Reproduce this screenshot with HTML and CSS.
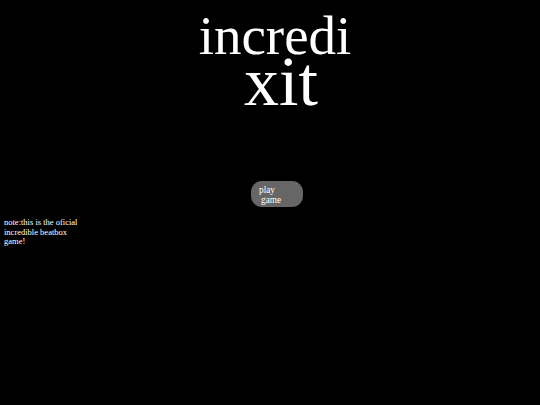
FILE: index.html
```html
<!DOCTYPE html>
<html>
<head>
<meta charset="utf-8">
<link rel="stylesheet" href="styles.css">
</head>
<body>
<main class="page">
  <h1 class="title">
    <span class="title-top">incredi</span>
    <span class="title-bottom">xit</span>
  </h1>
  <button class="play"><span class="play-l1">play</span><span class="play-l2">game</span></button>
  <p class="note">note:this is the oficial incredible beatbox game!</p>
</main>
</body>
</html>
```

FILE: styles.css
```css
html, body {
  margin: 0;
  padding: 0;
  background: #000;
}
body {
  width: 540px;
  height: 405px;
  overflow: hidden;
  font-family: "Liberation Serif", "Times New Roman", serif;
  color: #fff;
}
.page {
  display: flex;
  flex-direction: column;
  align-items: center;
}
.title {
  margin: 13px 0 0 0;
  font-weight: normal;
  display: flex;
  flex-direction: column;
  align-items: center;
}
.title-top {
  font-size: 55px;
  line-height: 46px;
  margin-left: 10px;
}
.title-bottom {
  font-size: 70px;
  line-height: 45px;
  margin-left: 22px;
}
.play {
  margin: 77px 0 0 14px;
  width: 52px;
  height: 26px;
  border: none;
  border-radius: 11px;
  background: #666;
  color: #fff;
  font-family: "Liberation Serif", "Times New Roman", serif;
  font-size: 9.3px;
  line-height: 9.3px;
  padding: 3px 0 0 8px;
  display: flex;
  flex-direction: column;
  align-items: flex-start;
  justify-content: center;
  text-align: left;
}
.play-l2 {
  padding-left: 2px;
}
.note {
  align-self: flex-start;
  margin: 11px 0 0 4px;
  width: 78px;
  font-size: 8.5px;
  line-height: 9.7px;
}
```
